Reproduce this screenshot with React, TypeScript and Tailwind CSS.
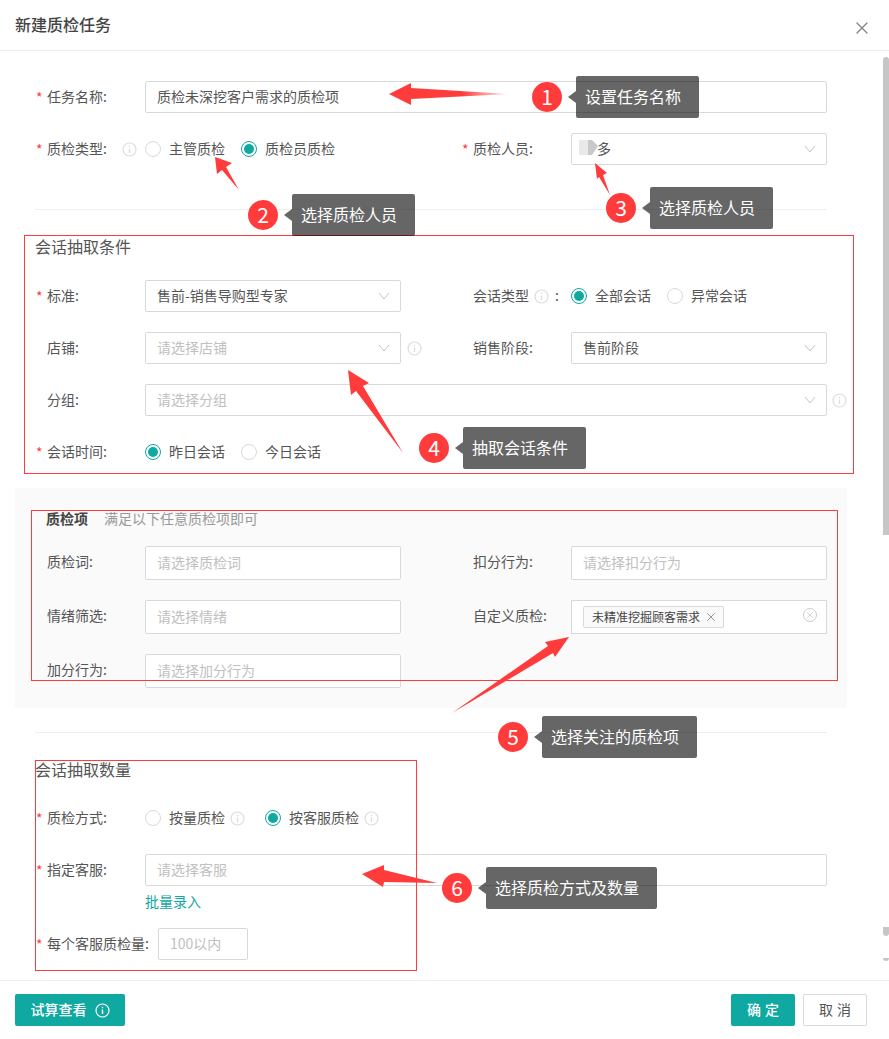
import React from 'react';
import { X } from 'lucide-react';

const Info = ({ className = 'text-[#ddd]' }: { className?: string }) => (
  <svg width="15" height="15" viewBox="0 0 15 15" fill="none" stroke="currentColor" className={`shrink-0 ${className}`}>
    <circle cx="7.5" cy="7.5" r="6.5" strokeWidth="1.2" />
    <path d="M7.5 6.5v4.5" strokeWidth="1.4" />
    <path d="M7.5 3.8v1.4" strokeWidth="1.4" />
  </svg>
);

const Chevron = () => (
  <svg width="12" height="8" viewBox="0 0 12 8" fill="none" stroke="#c4c4c4" className="shrink-0">
    <path d="M1 1l5 6 5-6" />
  </svg>
);

const Label = ({ text, required, className = 'w-[98px]' }: { text: string; required?: boolean; className?: string }) => (
  <div className="flex items-center shrink-0">
    <span className="w-[11px] text-[#ff3b3b] text-[14px] leading-none">{required ? '*' : ''}</span>
    <span className={`${className} pb-[2px] text-[14px] text-[#555]`}>{text}</span>
  </div>
);

const Input = ({ text, placeholder, select, className = 'h-8 w-[256px]' }: { text?: string; placeholder?: string; select?: boolean; className?: string }) => (
  <div className={`${className} flex items-center justify-between shrink-0 bg-white border border-[#d9d9d9] rounded-[2px] pl-[11px] pr-[10px] text-[14px]`}>
    {text ? <span className="pb-[2px] text-[#555]">{text}</span> : <span className="pb-[2px] text-[#c0c0c0]">{placeholder}</span>}
    {select && <Chevron />}
  </div>
);

const Radio = ({ text, checked, info }: { text: string; checked?: boolean; info?: boolean }) => (
  <div className="flex items-center">
    <span className={`w-4 h-4 rounded-full border flex items-center justify-center bg-white ${checked ? 'border-[#0fa9a2]' : 'border-[#d9d9d9]'}`}>
      {checked && <span className="w-[10px] h-[10px] rounded-full bg-[#0fa9a2]" />}
    </span>
    <span className="ml-2 pb-[2px] text-[14px] text-[#555]">{text}</span>
    {info && <span className="ml-[5px]"><Info /></span>}
  </div>
);

const Field = ({ children, className = 'h-8' }: { children: React.ReactNode; className?: string }) => (
  <div className={`${className} flex items-center`}>{children}</div>
);

const Callout = ({ n, text, className }: { n: number; text: string; className: string }) => (
  <div className={`absolute flex items-center ${className}`}>
    <span className="w-[30px] h-[30px] rounded-full bg-[#ff3b3b] text-white text-[21px] flex items-center justify-center">{n}</span>
    <span className="ml-[6px] w-0 h-0 border-y-[6px] border-y-transparent border-r-[8px] border-r-black/60" />
    <span className="h-[42px] pl-[9px] pr-[18px] pb-[3px] flex items-center bg-black/60 rounded-[2px] text-white text-[16px] whitespace-nowrap">{text}</span>
  </div>
);

const Outline = ({ className }: { className: string }) => (
  <div className={`absolute border border-[#ff3b3b] pointer-events-none ${className}`} />
);

// numbered red arrows drawn on top of the screenshot
const Arrows = () => (
  <svg width="889" height="1039" viewBox="0 0 889 1039" className="absolute left-0 top-0 pointer-events-none">
    <defs>
      <linearGradient id="fade" x1="389" y1="0" x2="509" y2="0" gradientUnits="userSpaceOnUse">
        <stop offset="0.6" stopColor="#ff3b3b" />
        <stop offset="1" stopColor="#ff3b3b" stopOpacity="0.1" />
      </linearGradient>
    </defs>
    <polygon points="389,94 411,83 411,88 509,94 411,99 411,105" fill="url(#fade)" />
    <g fill="#ff3b3b">
      <polygon points="215,157 232,163 226,167 239,190 222,170 217,174" />
      <polygon points="595,163 607,173 603,175 610,195 599,177 597,179" />
      <polygon points="348,370 369,383 363,386 403,453 356,391 351,395" />
      <polygon points="569,637 545,642 548,646 452,713 553,653 555,657" />
      <polygon points="362,874 384,865 384,870 437,883 384,882 383,887" />
    </g>
  </svg>
);

export default function App() {
  return (
    <div className="relative w-[889px] h-[1039px] flex flex-col overflow-hidden bg-white font-['Noto_Sans_CJK_SC','Noto_Sans',sans-serif]">
      {/* шапка */}
      <div className="h-[51px] shrink-0 flex items-center justify-between border-b border-[#eee] pl-[15px] pr-[17px]">
        <span className="pb-[2px] text-[16px] font-medium text-[#444]">新建质检任务</span>
        <X size={20} strokeWidth={1.6} className="text-[#888] mt-[6px]" />
      </div>

      <div className="flex-1 overflow-hidden pl-[35px] pr-[62px] pt-[30px]">
        <div className="pl-px">
          <Field>
            <Label text="任务名称:" required />
            <Input text="质检未深挖客户需求的质检项" className="h-8 flex-1" />
          </Field>
          <div className="grid grid-cols-[365px_365px] gap-x-[61px] mt-5">
            <Field>
              <div className="flex items-center w-[86px] shrink-0">
                <Label text="质检类型:" required className="w-[75px]" />
              </div>
              <Info />
              <div className="ml-[8px] flex gap-4">
                <Radio text="主管质检" />
                <Radio text="质检员质检" checked />
              </div>
            </Field>
            <Field>
              <Label text="质检人员:" required />
              <Input text="　多" select />
            </Field>
          </div>
        </div>

        <div className="border-t border-[#eee] mt-[44px]" />

        <div className="mt-[24px] h-6 flex items-center text-[16px] text-[#555]">会话抽取条件</div>
        <div className="pl-px mt-[22px] flex flex-col gap-5">
          <div className="grid grid-cols-[365px_365px] gap-x-[61px]">
            <Field>
              <Label text="标准:" required />
              <Input text="售前-销售导购型专家" select />
            </Field>
            <Field>
              <div className="flex items-center w-[109px] shrink-0 pl-[11px] text-[14px] text-[#555]">
                <span className="pb-[2px]">会话类型</span>
                <span className="ml-[5px]"><Info /></span>
                <span className="ml-[6px] pb-[2px]">:</span>
              </div>
              <div className="flex gap-4">
                <Radio text="全部会话" checked />
                <Radio text="异常会话" />
              </div>
            </Field>
          </div>
          <div className="grid grid-cols-[365px_365px] gap-x-[61px]">
            <Field>
              <Label text="店铺:" />
              <Input placeholder="请选择店铺" select />
              <span className="ml-[6px]"><Info /></span>
            </Field>
            <Field>
              <Label text="销售阶段:" />
              <Input text="售前阶段" select />
            </Field>
          </div>
          <Field>
            <Label text="分组:" />
            <Input placeholder="请选择分组" select className="h-8 flex-1" />
            <span className="absolute left-[832px]"><Info /></span>
          </Field>
          <Field>
            <Label text="会话时间:" required />
            <div className="flex gap-4">
              <Radio text="昨日会话" checked />
              <Radio text="今日会话" />
            </div>
          </Field>
        </div>

        {/* блок пунктов проверки */}
        <div className="mt-5 -mx-[20px] bg-[#fafafa] pl-[21px] pr-[20px] pb-5 pt-[19px]">
          <div className="flex items-center gap-4 h-6 pl-[10px] pb-[2px] text-[14px] ml-0">
            <span className="font-bold text-[#444]">质检项</span>
            <span className="text-[#999]">满足以下任意质检项即可</span>
          </div>
          <div className="grid grid-cols-[365px_365px] gap-x-[61px] gap-y-5 mt-[15px]">
            <Field className="h-[34px]">
              <Label text="质检词:" className="w-[98px] mb-[2px]" />
              <Input placeholder="请选择质检词" className="h-[34px] w-[256px]" />
            </Field>
            <Field className="h-[34px]">
              <Label text="扣分行为:" className="w-[98px] mb-[2px]" />
              <Input placeholder="请选择扣分行为" className="h-[34px] w-[256px]" />
            </Field>
            <Field className="h-[34px]">
              <Label text="情绪筛选:" className="w-[98px] mb-[2px]" />
              <Input placeholder="请选择情绪" className="h-[34px] w-[256px]" />
            </Field>
            <Field className="h-[34px]">
              <Label text="自定义质检:" className="w-[98px] mb-[2px]" />
              <div className="h-[34px] w-[256px] shrink-0 bg-white border border-[#d9d9d9] pl-[11px] pr-[9px] flex items-center justify-between">
                <span className="h-[22px] w-[141px] pl-2 pr-[5px] pb-px flex items-center justify-between bg-[#fafafa] border border-[#d9d9d9] rounded-[2px] text-[12px] text-[#444]">
                  未精准挖掘顾客需求
                  <X size={14} strokeWidth={1.5} className="text-[#888]" />
                </span>
                <span className="mb-[4px] w-[14px] h-[14px] rounded-full border border-[#ccc] flex items-center justify-center">
                  <X size={10} strokeWidth={1.6} className="text-[#bbb]" />
                </span>
              </div>
            </Field>
            <Field className="h-[34px]">
              <Label text="加分行为:" className="w-[98px] mb-[2px]" />
              <Input placeholder="请选择加分行为" className="h-[34px] w-[256px]" />
            </Field>
          </div>
        </div>

        <div className="border-t border-[#eee] mt-6" />

        <div className="mt-[24px] h-6 flex items-center text-[16px] text-[#555]">会话抽取数量</div>
        <div className="pl-px mt-[21px]">
          <Field>
            <Label text="质检方式:" required />
            <div className="flex gap-[20px]">
              <Radio text="按量质检" info />
              <Radio text="按客服质检" checked info />
            </div>
          </Field>
          <Field className="h-8 mt-5">
            <Label text="指定客服:" required />
            <Input placeholder="请选择客服" className="h-8 flex-1" />
          </Field>
          <div className="mt-[6px] h-5 pb-[2px] ml-[109px] flex items-center text-[14px] text-[#0fa9a2]">批量录入</div>
          <Field className="h-8 mt-4">
            <Label text="每个客服质检量:" required className="w-[111px]" />
            <Input placeholder="100以内" className="h-8 w-[90px]" />
          </Field>
        </div>
      </div>

      {/* подвал */}
      <div className="h-[59px] shrink-0 border-t border-[#eee] pl-[15px] pr-[22px] pt-[13px] flex justify-between items-start">
        <button className="h-8 w-[110px] rounded-[2px] bg-[#0fa9a2] text-white text-[14px] font-medium flex items-center justify-center gap-2">
          <span className="pb-[2px]">试算查看</span>
          <Info className="text-white" />
        </button>
        <div className="flex gap-2">
          <button className="h-8 w-16 pb-[2px] rounded-[2px] bg-[#0fa9a2] text-white text-[14px] font-medium [word-spacing:1px]">确 定</button>
          <button className="h-8 w-16 pb-[2px] rounded-[2px] bg-white border border-[#d9d9d9] text-[#555] text-[14px] [word-spacing:1px]">取 消</button>
        </div>
      </div>

      {/* остатки полосы прокрутки */}
      <div className="absolute right-0 top-[57px] w-[6px] h-[478px] bg-[#c6c6c6] rounded-t-[3px]" />
      <div className="absolute right-0 top-[927px] w-[6px] h-[9px] bg-[#c6c6c6] rounded-b-[3px]" />
      <div className="absolute right-0 top-[958px] w-[6px] h-[3px] bg-[#c6c6c6] rounded-b-[3px]" />

      {/* аннотации */}
      <Outline className="left-[24px] top-[235px] w-[830px] h-[239px]" />
      <Outline className="left-[31px] top-[510px] w-[807px] h-[171px]" />
      <Outline className="left-[35px] top-[760px] w-[382px] h-[211px]" />
      <Arrows />
      <div className="absolute left-[579px] top-[140px] w-[10px] h-[15px] bg-[#e9e9e9]" />
      <svg width="10" height="15" viewBox="0 0 10 15" className="absolute left-[588px] top-[140px]">
        <polygon points="0,0 4,0 10,6 4,15 0,15" fill="#c9c9c9" />
      </svg>
      <Callout n={1} text="设置任务名称" className="left-[532px] top-[76px]" />
      <Callout n={2} text="选择质检人员" className="left-[248px] top-[194px]" />
      <Callout n={3} text="选择质检人员" className="left-[606px] top-[187px]" />
      <Callout n={4} text="抽取会话条件" className="left-[419px] top-[427px]" />
      <Callout n={5} text="选择关注的质检项" className="left-[498px] top-[716px]" />
      <Callout n={6} text="选择质检方式及数量" className="left-[442px] top-[867px]" />
    </div>
  );
}
